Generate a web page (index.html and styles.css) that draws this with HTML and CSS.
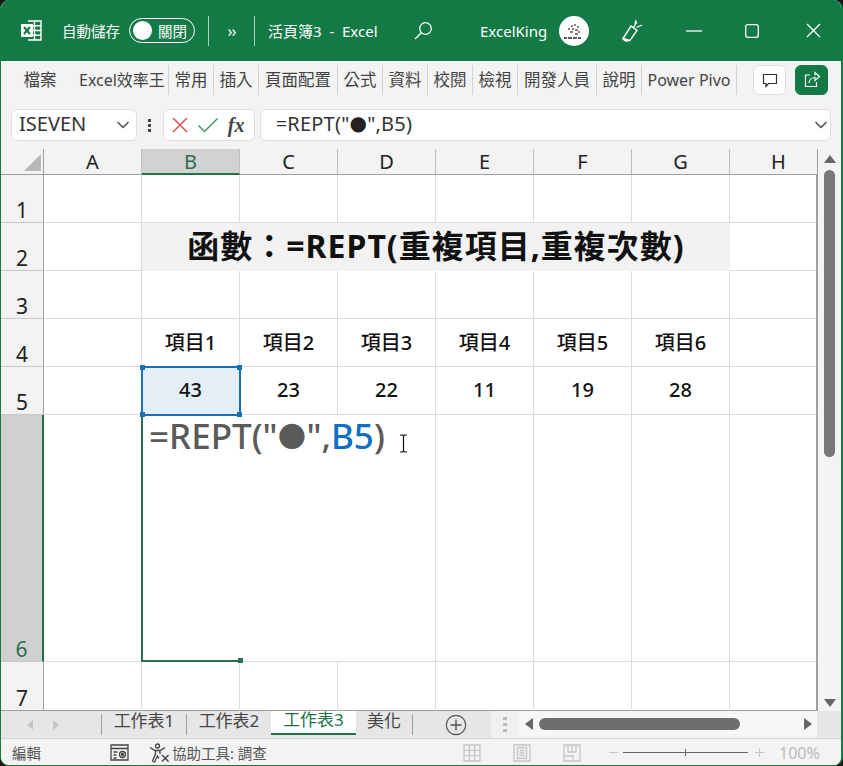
FILE: index.html
```html
<!DOCTYPE html>
<html lang="zh-Hant">
  <head>
    <meta charset="utf-8" />
    <title>活頁簿3 - Excel</title>
    <link rel="stylesheet" href="styles.css">
  </head>

  <body>
    <div class="window">
      <header class="titlebar">
        <svg class="logo" width="21" height="21" viewBox="0 0 21 21">
          <path d="M7 1h13v19H7" fill="none" stroke="#fff" stroke-width="1.4"/>
          <path d="M13.5 1v19M7 5.7h13M7 10.5h13M7 15.2h13" stroke="#fff" stroke-width="1.4"/>
          <rect x="0" y="4" width="12" height="13" rx="1" fill="#fff"/>
          <path d="M3 7l6 7M9 7l-6 7" stroke="#107c41" stroke-width="2"/>
        </svg>
        <span class="autosave">自動儲存</span>
        <div class="toggle"><i class="knob"></i><span>關閉</span></div>
        <i class="title-sep sep-a"></i>
        <span class="more">››</span>
        <i class="title-sep sep-b"></i>
        <span class="doc-name">活頁簿3&nbsp; -&nbsp; Excel</span>
        <svg class="search" width="20" height="20" viewBox="0 0 20 20" fill="none" stroke="#fff" stroke-width="1.3">
          <circle cx="12.5" cy="7.5" r="5.8"/>
          <path d="M8.3 11.7L2 18"/>
        </svg>
        <span class="user">ExcelKing</span>
        <svg class="avatar" width="30" height="30" viewBox="0 0 30 30">
          <circle cx="15" cy="15" r="15" fill="#fff"/>
          <path d="M9 13h2M12 10h2M15 9h2M18 11h2M11 16h3M16 14h3M19 16h2M13 13h2M16 18h3" stroke="#555" stroke-width="1.4"/>
          <path d="M5 22h3M9 22h4M14 22h4M19 22h3" stroke="#222" stroke-width="1.6"/>
        </svg>
        <svg class="pen" width="22" height="24" viewBox="0 0 22 24" fill="none" stroke="#fff" stroke-width="1.4">
          <path d="M2 19.5L10 7l6 4.5-7 10z"/>
          <path d="M2 19.5c1 2 2.500 2.500 4 2.500 1.500 0 2.500-.5 3-.5"/>
          <path d="M12 9l4-6M15.500 8.500L21 6M14 5l1-4" stroke-width="1.300"/>
        </svg>
        <svg class="win-btn win-min" width="18" height="14" viewBox="0 0 18 14"><path d="M1 7h16" stroke="#fff" stroke-width="1.300"/></svg>
        <svg class="win-btn win-max" width="14" height="14" viewBox="0 0 14 14"><rect x=".7" y=".7" width="12.600" height="12.600" rx="2" fill="none" stroke="#fff" stroke-width="1.300"/></svg>
        <svg class="win-btn win-close" width="15" height="15" viewBox="0 0 15 15"><path d="M1 1l13 13M14 1L1 14" stroke="#fff" stroke-width="1.300"/></svg>
      </header>

      <nav class="ribbon">
        <span class="tab tab-file">檔案</span>
        <span class="tab tab-addin">Excel效率王</span>
        <span class="tab">常用</span>
        <span class="tab">插入</span>
        <span class="tab tab-wide">頁面配置</span>
        <span class="tab">公式</span>
        <span class="tab">資料</span>
        <span class="tab">校閱</span>
        <span class="tab">檢視</span>
        <span class="tab tab-wide">開發人員</span>
        <span class="tab">說明</span>
        <span class="tab tab-pivot">Power Pivo</span>
        <button class="ribbon-btn btn-comment">
          <svg width="16" height="16" viewBox="0 0 16 16" fill="none" stroke="#333" stroke-width="1.200">
            <path d="M1.500 2.500h13v9H6.500L4 14.500v-3H1.500z"/>
          </svg>
        </button>
        <button class="ribbon-btn btn-share">
          <svg width="18" height="18" viewBox="0 0 18 18" fill="none" stroke="#fff" stroke-width="1.200">
            <path d="M7 4H2.500v11.500h11V11"/>
            <path d="M6 12c.3-3.500 3-5.500 6-5.500V9.500L16.500 5.500 12 1.500v3"/>
          </svg>
        </button>
      </nav>

      <div class="formula-row">
        <div class="name-box">
          <span class="name-text">ISEVEN</span>
          <svg width="14" height="8" viewBox="0 0 14 8" fill="none" stroke="#444" stroke-width="1.300"><path d="M1.500 1l5.500 5.500L12.500 1"/></svg>
        </div>
        <div class="grip"><i></i><i></i><i></i></div>
        <div class="fx-box">
          <svg width="18" height="18" viewBox="0 0 18 18" fill="none" stroke="#d9534f" stroke-width="1.500"><path d="M2 2l14 14M16 2L2 16"/></svg>
          <svg width="22" height="16" viewBox="0 0 22 16" fill="none" stroke="#3f9a6b" stroke-width="1.500"><path d="M1.500 8.500L7.500 14.500 20.500 1.500"/></svg>
          <span class="fx">fx</span>
        </div>
        <div class="formula-box">
          <span class="formula-text">=REPT("<span class="dot">●</span>",B5)</span>
          <svg width="14" height="8" viewBox="0 0 14 8" fill="none" stroke="#444" stroke-width="1.300"><path d="M1.500 1l5.500 5.500L12.500 1"/></svg>
        </div>
      </div>

      <div class="workspace">
        <div class="sheet">
          <div class="ch corner"><i class="corner-tri"></i></div>
          <div class="ch">A</div>
          <div class="ch ch-sel">B</div>
          <div class="ch">C</div>
          <div class="ch">D</div>
          <div class="ch">E</div>
          <div class="ch">F</div>
          <div class="ch">G</div>
          <div class="ch ch-last">H</div>

          <div class="rh">1</div>
          <div class="cell"></div><div class="cell"></div><div class="cell"></div><div class="cell"></div>
          <div class="cell"></div><div class="cell"></div><div class="cell"></div><div class="cell cell-last"></div>

          <div class="rh">2</div>
          <div class="cell"></div>
          <div class="cell cell-title">函數：=REPT(重複項目,重複次數)</div>
          <div class="cell cell-last"></div>

          <div class="rh">3</div>
          <div class="cell"></div><div class="cell"></div><div class="cell"></div><div class="cell"></div>
          <div class="cell"></div><div class="cell"></div><div class="cell"></div><div class="cell cell-last"></div>

          <div class="rh">4</div>
          <div class="cell"></div>
          <div class="cell cell-head">項目1</div>
          <div class="cell cell-head">項目2</div>
          <div class="cell cell-head">項目3</div>
          <div class="cell cell-head">項目4</div>
          <div class="cell cell-head">項目5</div>
          <div class="cell cell-head">項目6</div>
          <div class="cell cell-last"></div>

          <div class="rh">5</div>
          <div class="cell"></div>
          <div class="cell cell-num cell-ref">43
            <div class="range-ref">
              <i class="handle tl"></i><i class="handle tr"></i><i class="handle bl"></i><i class="handle br"></i>
            </div>
          </div>
          <div class="cell cell-num">23</div>
          <div class="cell cell-num">22</div>
          <div class="cell cell-num">11</div>
          <div class="cell cell-num">19</div>
          <div class="cell cell-num">28</div>
          <div class="cell cell-last"></div>

          <div class="rh rh-sel">6</div>
          <div class="cell"></div>
          <div class="cell cell-edit cell-open">
            <div class="edit-text">=REPT("<span class="edit-dot">●</span>",<span class="edit-ref">B5</span>)</div>
            <div class="range-edit"><i class="handle green"></i></div>
            <svg class="ibeam" width="9" height="19" viewBox="0 0 9 19" fill="none" stroke="#111" stroke-width="1.200">
              <path d="M1 1h2.500l1 1 1-1H8M4.500 2v15M1 18h2.500l1-1 1 1H8"/>
            </svg>
          </div>
          <div class="cell cell-open"></div>
          <div class="cell"></div>
          <div class="cell"></div>
          <div class="cell"></div>
          <div class="cell"></div>
          <div class="cell cell-last"></div>

          <div class="rh rh-end">7</div>
          <div class="cell cell-end"></div><div class="cell cell-end"></div><div class="cell cell-end"></div><div class="cell cell-end"></div>
          <div class="cell cell-end"></div><div class="cell cell-end"></div><div class="cell cell-end"></div><div class="cell cell-end cell-last"></div>
        </div>

        <div class="vscroll">
          <i class="arrow-up"></i>
          <i class="vthumb"></i>
          <i class="arrow-down"></i>
        </div>
      </div>

      <div class="tabbar">
        <div class="sheet-nav"><i class="nav-left"></i><i class="nav-right"></i></div>
        <div class="sheet-tabs">
          <span class="sheet-tab">工作表1</span>
          <span class="sheet-tab">工作表2</span>
          <span class="sheet-tab sheet-tab-on">工作表3</span>
          <span class="sheet-tab sheet-tab-end">美化</span>
        </div>
        <svg class="add-sheet" width="22" height="22" viewBox="0 0 22 22" fill="none" stroke="#555" stroke-width="1.200">
          <circle cx="11" cy="11" r="9.700"/>
          <path d="M11 5.500v11M5.500 11h11" stroke-width="1.400"/>
        </svg>
        <div class="hscroll">
          <div class="hgrip"><i></i><i></i><i></i></div>
          <div class="htrack">
            <i class="hleft"></i>
            <i class="hthumb"></i>
            <i class="hright"></i>
          </div>
        </div>
      </div>

      <footer class="statusbar">
        <span class="mode">編輯</span>
        <svg class="macro" width="19" height="17" viewBox="0 0 19 17" fill="none" stroke="#444" stroke-width="1.300">
          <path d="M1 1h17v15H1zM1 4.500h17"/>
          <circle cx="12.500" cy="10.500" r="3"/>
          <circle cx="12.500" cy="10.500" r="1" fill="#444"/>
          <path d="M3.500 8h4M3.500 11h3M3.500 14h3"/>
        </svg>
        <svg class="access" width="21" height="20" viewBox="0 0 21 20" fill="none" stroke="#444" stroke-width="1.300">
          <circle cx="8.500" cy="3" r="2"/>
          <path d="M1 4.500l5 3h5l5-3M6.500 8v3L3.500 18l2 1 3-6 1.500 2.500M11 8v3"/>
          <path d="M13 12l6.500 6.500M19.500 12L13 18.500" stroke-width="1.500"/>
        </svg>
        <span class="access-text">協助工具: 調查</span>
        <svg class="view view-grid" width="18" height="18" viewBox="0 0 18 18" fill="none" stroke="#c6c6c6" stroke-width="1.300">
          <path d="M1 1h16v16H1zM6.300 1v16M11.700 1v16M1 6.300h16M1 11.700h16"/>
        </svg>
        <svg class="view view-page" width="18" height="18" viewBox="0 0 18 18" fill="none" stroke="#c6c6c6" stroke-width="1.300">
          <path d="M1 1h16v16H1zM4.500 3.500h9v11h-9zM6.500 6.500h5M6.500 9h5M6.500 11.500h5"/>
        </svg>
        <svg class="view view-break" width="18" height="18" viewBox="0 0 18 18" fill="none" stroke="#c6c6c6" stroke-width="1.300">
          <path d="M1 1h16v16H1zM1 12h9v5M5 1v7h8V1M9 1v7"/>
        </svg>
        <span class="zoom-sign zoom-minus"></span>
        <div class="slider"><i class="slider-tick"></i></div>
        <span class="zoom-sign zoom-plus"></span>
        <span class="zoom-val">100%</span>
      </footer>
    </div>
  </body>
</html>
```

FILE: styles.css
```css
* {
  box-sizing: border-box;
}

html,
body {
  margin: 0;
  height: 100%;
  background: #181818;
  overflow: hidden;
}

i {
  display: block;
}

.window {
  width: 843px;
  height: 766px;
  display: flex;
  flex-direction: column;
  background: #f3f3f3;
  border: solid #107c41;
  border-width: 0 2px 1px 1px;
  border-radius: 9px;
  overflow: hidden;
  font-family: "Noto Sans", "Noto Sans CJK TC", sans-serif;
  color: #333;
}

/* title bar */

.titlebar {
  flex: 0 0 61px;
  margin: 0 -2px 0 -1px;
  display: flex;
  align-items: center;
  background: #147a45;
  color: #fff;
  font-size: 15px;
  white-space: nowrap;
}

.logo {
  margin-left: 21px;
}

.autosave {
  margin-left: 20px;
  width: 58px;
  font-size: 14.500px;
}

.toggle {
  margin-left: 9px;
  width: 66px;
  height: 25px;
  display: flex;
  align-items: center;
  border: 1px solid #fff;
  border-radius: 13px;
  padding-left: 3px;
  font-size: 14.500px;
}

.knob {
  width: 19px;
  height: 19px;
  border-radius: 50%;
  background: #fff;
  margin-right: 6px;
}

.title-sep {
  width: 1px;
  height: 30px;
  background: #a9d0bb;
}

.sep-a {
  margin-left: 13px;
}

.more {
  width: 45px;
  text-align: center;
  font-size: 16px;
  line-height: 1;
  letter-spacing: -1px;
}

.doc-name {
  margin-left: 13px;
  width: 110px;
  font-size: 15px;
}

.search {
  margin-left: 35px;
}

.user {
  margin-left: 47px;
  width: 66px;
  font-size: 15px;
}

.avatar {
  margin-left: 13px;
}

.pen {
  margin-left: 32px;
}

.win-min {
  margin-left: 42px;
}

.win-max {
  margin-left: 42px;
}

.win-close {
  margin-left: 47px;
}

/* ribbon tabs */

.ribbon {
  flex: 0 0 42px;
  display: flex;
  align-items: flex-start;
  padding-top: 4px;
  font-size: 16.500px;
  color: #444;
  white-space: nowrap;
}

.tab {
  height: 30px;
  width: 45px;
  line-height: 30px;
  text-align: center;
  border-right: 1px solid #d0d0d0;
}

.tab-wide {
  width: 79px;
}

.tab-file {
  width: 78px;
  border-right: 0;
}

.tab-addin {
  width: 90px;
  text-align: left;
  font-size: 16px;
}

.tab-pivot {
  width: 95px;
  font-size: 16px;
}

.ribbon-btn {
  width: 33px;
  height: 30px;
  padding: 0;
  display: flex;
  align-items: center;
  justify-content: center;
  border: 1px solid #dcdcdc;
  border-radius: 6px;
  background: #fff;
}

.btn-comment {
  margin-left: 16px;
}

.btn-share {
  margin-left: 9px;
  background: #147a45;
  border-color: #147a45;
}

/* formula bar */

.formula-row {
  flex: 0 0 46px;
  display: flex;
  align-items: flex-start;
  padding: 6px 10px 0;
  font-size: 20px;
  color: #333;
}

.name-box,
.fx-box,
.formula-box {
  height: 32px;
  display: flex;
  align-items: center;
  background: #fff;
  border: 1px solid #dfdfdf;
  border-radius: 6px;
}

.name-box {
  width: 126px;
  justify-content: space-between;
  padding: 0 6px 0 7px;
}

.name-text,
.formula-text {
  padding-bottom: 3px;
}

.grip {
  width: 26px;
  height: 32px;
  display: flex;
  flex-direction: column;
  align-items: center;
  justify-content: center;
  gap: 2px;
}

.grip i {
  width: 3px;
  height: 3px;
  background: #444;
}

.fx-box {
  width: 92px;
  padding-left: 7px;
  gap: 8px;
}

.fx {
  font: italic bold 20px "Liberation Serif", serif;
  color: #444;
  margin-left: 1px;
}

.formula-box {
  margin-left: 5px;
  width: 572px;
  padding: 0 2px 0 15px;
  justify-content: space-between;
}

.formula-text {
  white-space: nowrap;
  letter-spacing: 0.2px;
}

.dot {
  font-family: "DejaVu Sans", sans-serif;
  color: #222;
  vertical-align: 1px;
}

/* sheet */

.workspace {
  flex: 0 0 562px;
  display: flex;
}

.sheet {
  width: 816px;
  display: grid;
  grid-template-columns: 43px repeat(7, 98px) 87px;
  grid-template-rows: 26px repeat(5, 48px) 247px 49px;
  background: #fff;
}

.ch {
  display: flex;
  align-items: center;
  justify-content: center;
  background: #f3f3f3;
  border-right: 1px solid #bdbdbd;
  border-bottom: 1px solid #9e9e9e;
  font-size: 20px;
  color: #222;
}

.ch-last {
  border-right: 0;
  padding-left: 10px;
}

.ch-sel {
  background: #d2d2d2;
  border-bottom: 2px solid #217346;
  color: #2a6e4e;
}

.corner {
  align-items: flex-end;
  justify-content: flex-end;
  padding: 0 2px 3px 0;
  border-right-color: #9e9e9e;
}

.corner-tri {
  width: 0;
  height: 0;
  border-style: solid;
  border-width: 0 0 17px 17px;
  border-color: transparent transparent #b8b8b8 transparent;
}

.rh {
  display: flex;
  align-items: flex-end;
  justify-content: center;
  background: #f3f3f3;
  border-right: 1px solid #9e9e9e;
  border-bottom: 1px solid #c8c8c8;
  font-size: 21px;
  line-height: 24px;
  color: #222;
}

.rh-sel {
  background: #d0d0d0;
  border-right: 2px solid #217346;
  color: #2a6e4e;
}

.rh-end {
  border-bottom: 1px solid #9e9e9e;
}

.cell {
  display: flex;
  align-items: center;
  justify-content: center;
  border-right: 1px solid #dcdcdc;
  border-bottom: 1px solid #dcdcdc;
  color: #111;
}

.cell-last {
  border-right: 1px solid #9e9e9e;
}

.cell-end {
  border-bottom: 1px solid #9e9e9e;
}

.cell-title {
  grid-column: span 6;
  padding-bottom: 6px;
  background: #f2f2f2;
  border-right: 0;
  border-bottom: 1px solid #f2f2f2;
  font-size: 32px;
  font-weight: 700;
  letter-spacing: 1px;
  white-space: nowrap;
}

.cell-head,
.cell-num {
  padding-bottom: 2px;
  font-size: 20px;
  font-weight: 500;
}

/* the range the formula points at */

.cell-ref {
  position: relative;
  background: #e4eef7;
}

.range-ref {
  position: absolute;
  left: -1px;
  top: -1px;
  right: -2px;
  bottom: -2px;
  border: 2px solid #1a6fb5;
  z-index: 2;
}

.handle {
  position: absolute;
  width: 5px;
  height: 5px;
  background: #1a6fb5;
}

.tl {
  left: -3px;
  top: -3px;
}

.tr {
  right: -3px;
  top: -3px;
}

.bl {
  left: -3px;
  bottom: -3px;
}

.br {
  right: -3px;
  bottom: -3px;
}

/* the cell being edited */

.cell-edit {
  position: relative;
  align-items: flex-start;
  justify-content: flex-start;
  padding-left: 7px;
}

.cell-open {
  border-right: 0;
}

.edit-text {
  font-size: 35px;
  line-height: 42px;
  font-weight: 500;
  color: #5a5a5a;
  white-space: nowrap;
}

.edit-dot {
  font-family: "DejaVu Sans", sans-serif;
  font-size: 33px;
  vertical-align: 4px;
  line-height: 1;
}

.edit-ref {
  color: #0f6fc6;
}

.range-edit {
  position: absolute;
  left: -1px;
  top: -1px;
  right: -2px;
  bottom: -1px;
  border: solid #2a6e4e;
  border-width: 2px 0 2px 2px;
  z-index: 1;
}

.green {
  right: -1px;
  bottom: -3px;
  background: #2a6e4e;
}

.ibeam {
  position: absolute;
  left: 257px;
  top: 19px;
}

/* vertical scrollbar */

.vscroll {
  width: 24px;
  display: flex;
  flex-direction: column;
  align-items: center;
  background: #f3f3f3;
  border-left: 1px solid #9e9e9e;
}

.arrow-up,
.arrow-down {
  width: 0;
  height: 0;
  border-left: 6px solid transparent;
  border-right: 6px solid transparent;
}

.arrow-up {
  margin-top: 6px;
  border-bottom: 8px solid #666;
}

.vthumb {
  margin-top: 7px;
  width: 11px;
  height: 287px;
  border-radius: 6px;
  background: #787878;
}

.arrow-down {
  margin-top: auto;
  margin-bottom: 4px;
  border-top: 8px solid #666;
}

/* sheet tabs */

.tabbar {
  flex: 0 0 28px;
  display: flex;
  align-items: flex-start;
  background: #e6e6e6;
  border-bottom: 1px solid #d4d4d4;
}

.sheet-nav {
  width: 100px;
  height: 27px;
  display: flex;
  align-items: center;
  padding-left: 26px;
  gap: 20px;
}

.nav-left,
.nav-right {
  width: 0;
  height: 0;
  border-top: 5px solid transparent;
  border-bottom: 5px solid transparent;
}

.nav-left {
  border-right: 6px solid #c4c4c4;
}

.nav-right {
  border-left: 6px solid #c4c4c4;
}

.sheet-tabs {
  display: flex;
  font-size: 17px;
  color: #444;
}

.sheet-tab {
  width: 85px;
  height: 21px;
  margin-top: 3px;
  border-left: 1px solid #9e9e9e;
  line-height: 13px;
  text-align: center;
  white-space: nowrap;
}

.sheet-tab-on {
  height: 24px;
  margin-top: 0;
  border-left: 0;
  border-bottom: 2px solid #217346;
  background: #fff;
  color: #217346;
  line-height: 18px;
}

.sheet-tab-end {
  width: 57px;
  border-left: 0;
  border-right: 1px solid #9e9e9e;
}

.add-sheet {
  margin: 3px 0 0 32px;
}

.hscroll {
  height: 27px;
  margin-left: 24px;
  display: flex;
  background: #f0f0f0;
}

.hgrip {
  width: 28px;
  display: flex;
  flex-direction: column;
  align-items: center;
  justify-content: center;
  gap: 3px;
}

.hgrip i {
  width: 4px;
  height: 3px;
  background: #bbb;
}

.htrack {
  width: 298px;
  height: 25px;
  display: flex;
  align-items: center;
  padding-left: 6px;
  background: #f6f6f6;
}

.hleft,
.hright {
  width: 0;
  height: 0;
  border-top: 6px solid transparent;
  border-bottom: 6px solid transparent;
}

.hleft {
  border-right: 8px solid #666;
}

.hthumb {
  margin-left: 6px;
  width: 201px;
  height: 12px;
  border-radius: 6px;
  background: #6e6e6e;
}

.hright {
  margin-left: 64px;
  border-left: 8px solid #666;
}

/* status bar */

.statusbar {
  flex: 0 0 27px;
  display: flex;
  align-items: center;
  background: #f3f3f3;
  font-size: 14.500px;
  color: #555;
  white-space: nowrap;
}

.mode {
  margin-left: 11px;
  width: 28px;
}

.macro {
  margin-left: 70px;
}

.access {
  margin-left: 20px;
}

.access-text {
  margin-left: 2px;
  width: 96px;
}

.view-grid {
  margin-left: 195px;
}

.view-page,
.view-break {
  margin-left: 32px;
}

.zoom-sign {
  position: relative;
  width: 9px;
  height: 1px;
  background: #c6c6c6;
}

.zoom-minus {
  margin-left: 28px;
}

.zoom-plus {
  margin-left: 7px;
}

.zoom-plus::after {
  content: "";
  position: absolute;
  left: 4px;
  top: -4px;
  width: 1px;
  height: 9px;
  background: #c6c6c6;
}

.slider {
  margin-left: 5px;
  width: 125px;
  height: 1px;
  background: #666;
  position: relative;
}

.slider-tick {
  position: absolute;
  left: 62px;
  top: -3px;
  width: 1px;
  height: 7px;
  background: #666;
}

.zoom-val {
  margin-left: 15px;
  font-size: 16px;
  color: #bbb;
}
```
